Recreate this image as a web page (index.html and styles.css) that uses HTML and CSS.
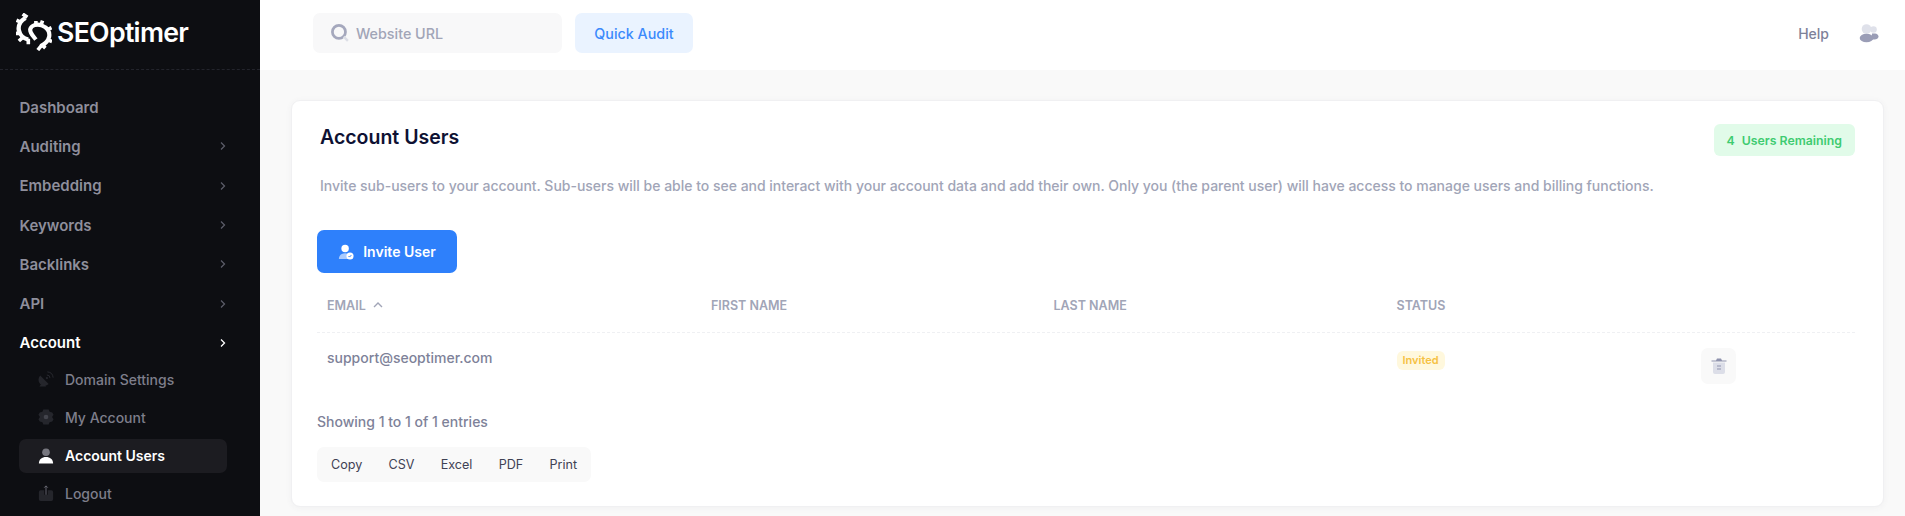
FILE: index.html
```html
<!DOCTYPE html>
<html lang="en">
<head>
<meta charset="utf-8">
<title>Account Users</title>
<link rel="stylesheet" href="styles.css">
</head>
<body>
<div class="app">
  <aside class="sidebar">
    <div class="brand">
      <svg class="brand-icon" viewBox="0 0 38 38" width="36" height="38" fill="none" stroke="#fff">
        <path d="M10 4C5 7 2 12 3 17C4 22 8 26 13 27" stroke-width="4.600"/>
        <path d="M21 27C18 23 14.500 20 15 16C16 12 22 10 27 12C33 14 36 19 35 24C34 29 30 32 26 34" stroke-width="4.400"/>
        <path d="M7 0 12 3.500M0.500 6.500 6 9M0 20.500H5M3 28.500 7.500 24.500M13 32V26M21 7.500V13M28 7 26 13M37.500 14.500 32 17M38 29 33 27M31 36 27 32M23 38 27 33" stroke-width="3.800"/>
      </svg>
      <span class="brand-name">SEOptimer</span>
    </div>
    <nav class="nav">
      <a class="nav-item">Dashboard</a>
      <a class="nav-item">Auditing<svg class="chev" viewBox="0 0 8 10"><path d="M2 1.500 5.500 5 2 8.500"/></svg></a>
      <a class="nav-item">Embedding<svg class="chev" viewBox="0 0 8 10"><path d="M2 1.500 5.500 5 2 8.500"/></svg></a>
      <a class="nav-item">Keywords<svg class="chev" viewBox="0 0 8 10"><path d="M2 1.500 5.500 5 2 8.500"/></svg></a>
      <a class="nav-item">Backlinks<svg class="chev" viewBox="0 0 8 10"><path d="M2 1.500 5.500 5 2 8.500"/></svg></a>
      <a class="nav-item">API<svg class="chev" viewBox="0 0 8 10"><path d="M2 1.500 5.500 5 2 8.500"/></svg></a>
      <a class="nav-item nav-open">Account<svg class="chev" viewBox="0 0 8 10"><path d="M2 1.500 5.500 5 2 8.500"/></svg></a>
      <div class="subnav">
        <a class="sub-item">
          <svg class="sub-icon" viewBox="0 0 18 18"><path class="dim" d="M2.500 5 12 14.500A6.700 6.700 0 0 1 2.500 5Z"/><path class="dim" d="M5 13 1.500 17.500H9L8 14.500Z"/><path class="dim-line" d="M10 4.500a3.500 3.500 0 0 1 3.500 3.500M10.500 1a7 7 0 0 1 6.500 6.500"/><circle class="dim" cx="10" cy="8" r="1.300"/></svg>
          Domain Settings
        </a>
        <a class="sub-item">
          <svg class="sub-icon" viewBox="0 0 18 18"><path class="dim" d="M6 0.500h6l1 2.500 3 .8 1.500 2.700-1.700 2.500 1.700 2.500-1.500 2.700-3 .8-1 2.500H6l-1-2.500-3-.8L.500 11.500 2.200 9 .500 6.500 2 3.800 5 3Z"/><circle class="gear-dot" cx="9" cy="9" r="2.600"/></svg>
          My Account
        </a>
        <a class="sub-item sub-active">
          <svg class="sub-icon" viewBox="0 0 18 18"><circle cx="9" cy="4.800" r="4.300" fill="#77777f"/><path d="M1 17.500c0-5 3.500-7.500 8-7.500s8 2.500 8 7.500Z" fill="#fff"/></svg>
          Account Users
        </a>
        <a class="sub-item">
          <svg class="sub-icon" viewBox="0 0 18 18"><path class="dim" d="M3 6H7V11H11V6H15a2 2 0 0 1 2 2V16a2 2 0 0 1-2 2H3a2 2 0 0 1-2-2V8a2 2 0 0 1 2-2Z"/><path class="up-line" d="M9 11V1M7 3l2-2 2 2"/></svg>
          Logout
        </a>
      </div>
    </nav>
  </aside>
  <div class="main">
    <header class="topbar">
      <div class="search">
        <svg class="search-icon" viewBox="0 0 19 19" width="20" height="20"><circle cx="8.500" cy="8.500" r="6.200" fill="none" stroke="#a5a8bd" stroke-width="2.600"/><path d="M13 13 17 17" stroke="#dcdee6" stroke-width="2.200"/></svg>
        <span class="search-text">Website URL</span>
      </div>
      <button class="audit-btn">Quick Audit</button>
      <span class="help">Help</span>
      <svg class="top-user" viewBox="0 0 20 20" width="20" height="20"><circle cx="14.500" cy="6.500" r="3.300" fill="#dfe1ea"/><path d="M13 10.500h3c2 0 3.500 1.500 3.500 3 0 2-2 3-4 3h-3Z" fill="#9a9db6"/><circle cx="7.500" cy="6" r="4.800" fill="#dfe1ea"/><ellipse cx="7.500" cy="15" rx="6.800" ry="4.300" fill="#9a9db6"/></svg>
    </header>
    <section class="card">
      <div class="card-head">
        <h1 class="title">Account Users</h1>
        <span class="remaining"><b>4</b>Users Remaining</span>
      </div>
      <p class="intro">Invite sub-users to your account. Sub-users will be able to see and interact with your account data and add their own. Only you (the parent user) will have access to manage users and billing functions.</p>
      <button class="invite-btn">
        <svg viewBox="0 0 18 18" width="16" height="16"><circle cx="8" cy="5" r="4.200" fill="#fff"/><path d="M1 17c0-4.500 3-6.500 7-6.500 1.500 0 2.500.3 3.500.8V17Z" fill="#a9cbff"/><circle cx="13.500" cy="13.500" r="4" fill="#fff"/><path d="M11.800 13.500l1.200 1.200 2-2.200" fill="none" stroke="#2e80fb" stroke-width="1.100"/></svg>
        Invite User
      </button>
      <div class="table">
        <div class="row row-head">
          <div class="cell">EMAIL<svg class="sort" viewBox="0 0 10 8" width="10" height="8"><path d="M1 6 5 2l4 4"/></svg></div>
          <div class="cell">FIRST NAME</div>
          <div class="cell">LAST NAME</div>
          <div class="cell">STATUS</div>
          <div class="cell"></div>
        </div>
        <div class="row row-body">
          <div class="cell email">support@seoptimer.com</div>
          <div class="cell"></div>
          <div class="cell"></div>
          <div class="cell"><span class="status">Invited</span></div>
          <div class="cell">
            <span class="trash">
              <svg viewBox="0 0 18 18" width="18" height="18"><path d="M6 3.500 7 1.500h4l1 2h4.500v1h-15v-1Z" fill="#8f93ae"/><path d="M3 5.500h12V15a2 2 0 0 1-2 2H5a2 2 0 0 1-2-2Z" fill="#dcdee8"/><path d="M7 9h4M7 12h4" stroke="#8f93ae" stroke-width="1.200"/></svg>
            </span>
          </div>
        </div>
      </div>
      <div class="entries">Showing 1 to 1 of 1 entries</div>
      <div class="exports">
        <span>Copy</span><span>CSV</span><span>Excel</span><span>PDF</span><span>Print</span>
      </div>
    </section>
  </div>
</div>
</body>
</html>
```
FILE: styles.css
```css
* { box-sizing: border-box; }
html, body { margin: 0; height: 516px; overflow: hidden; }
body { font-family: Inter, "Liberation Sans", sans-serif; background: #f9f9f9; color: #3f4254; }
.app { display: flex; height: 516px; }

.sidebar { width: 260px; flex: none; background: #0d0e12; }
.brand { height: 70px; display: flex; align-items: center; gap: 5px; padding: 0 0 5px 16px; border-bottom: 1px dashed #23242c; }
.brand-icon { flex: none; }
.brand-name { font-size: 26.700px; font-weight: 600; color: #fff; letter-spacing: -0.7px; }
.nav { padding: 17.500px 14px 0 19.500px; display: flex; flex-direction: column; }
.nav-item { height: 39.300px; flex: none; display: flex; align-items: center; justify-content: space-between; padding-right: 19.500px; font-size: 15px; font-weight: 600; color: #8f8f9c; }
.nav-open { color: #fff; }
.chev { width: 8px; height: 10px; fill: none; stroke: #5b5c68; stroke-width: 1.300; }
.nav-open .chev { stroke: #fff; }
.subnav { display: flex; flex-direction: column; margin: -2px 0 0 -0.500px; }
.sub-item { height: 37.700px; flex: none; display: flex; align-items: center; gap: 11px; padding-left: 19px; border-radius: 7px; font-size: 14px; font-weight: 500; color: #7e7e8b; width: 208px; }
.sub-active { height: 34px; margin: 3px 0 1.500px; color: #fff; font-weight: 600; background: #1c1c21; }
.sub-icon { width: 16px; height: 16px; flex: none; }
.dim { fill: #25262c; }
.gear-dot { fill: #43444c; }
.dim-line { fill: none; stroke: #2b2c33; stroke-width: 1; }
.up-line { fill: none; stroke: #6f707a; stroke-width: 1; }

.main { flex: 1; min-width: 0; display: flex; flex-direction: column; background: linear-gradient(#f5f5f5, #f9f9f9 30px); }
.topbar { height: 70px; flex: none; background: #fff; display: flex; align-items: center; padding: 0 25px 4px 53px; }
.search { width: 249px; height: 40px; background: #f8f8f9; border-radius: 7px; display: flex; align-items: center; gap: 6px; padding-left: 17px; }
.search-text { font-size: 14.300px; font-weight: 500; color: #a1a5b7; }
.audit-btn { margin-left: 13px; width: 118px; height: 40px; border: 0; border-radius: 7px; background: #eaf3ff; color: #3b8afc; font: 500 14.300px Inter, sans-serif; }
.help { margin-left: auto; margin-right: 3px; font-size: 14px; font-weight: 500; color: #7e8299; }
.top-user { margin-left: 27px; margin-top: -1px; margin-right: 1px; }

.card { margin: 30px 21px 0 31px; height: 407px; background: #fff; border: 1px solid #f0f0f2; border-radius: 9px; padding: 24px 28px 0 25px; box-shadow: 0 1px 6px rgba(70, 70, 90, .05); }
.card-head { display: flex; justify-content: space-between; align-items: flex-start; padding-left: 3px; }
.title { margin: -1px 0 0; font-size: 19.500px; font-weight: 600; line-height: 26px; color: #0e1133; }
.remaining { height: 32px; margin-top: -1px; padding: 0 13px 0 12.500px; display: flex; align-items: center; gap: 7px; background: #e1fbe9; border-radius: 6px; font-size: 12.300px; font-weight: 600; color: #3ecb70; }
.remaining b { font-weight: 600; }
.intro { margin: 19px 0 0 3px; font-size: 14px; letter-spacing: -0.012px; font-weight: 500; line-height: 21px; color: #a1a5b7; white-space: nowrap; }
.invite-btn { margin-top: 34px; width: 140px; height: 43px; display: flex; align-items: center; justify-content: center; gap: 9px; border: 0; border-radius: 7px; background: #2e80fb; color: #fff; font: 600 14px Inter, sans-serif; }

.row { display: grid; grid-template-columns: 384px 342.500px 343px 304.500px 1fr; padding-left: 10px; }
.row-head { height: 59.500px; padding-top: 6px; align-items: center; border-bottom: 1px dashed #eff0f3; font-size: 12.500px; font-weight: 600; color: #a1a5b7; }
.row-head .cell { display: flex; align-items: center; gap: 7px; }
.sort { fill: none; stroke: #a1a5b7; stroke-width: 1.400; }
.row-body { height: 79px; padding-top: 15px; }
.email { font-size: 14px; font-weight: 500; color: #7e8299; line-height: 20px; }
.status { display: inline-block; height: 19px; padding: 0 6px; line-height: 19px; border-radius: 6px; background: #fff8dd; color: #f6c142; font-size: 11px; font-weight: 600; }
.trash { display: flex; align-items: center; justify-content: center; width: 35px; height: 36px; background: #f9f9f9; border-radius: 7px; }

.entries { font-size: 14px; font-weight: 500; color: #7e8299; line-height: 20px; }
.exports { margin-top: 15px; width: 274px; height: 35px; background: #f9f9f9; border-radius: 7px; display: flex; align-items: center; justify-content: space-between; padding: 0 14px; font-size: 12.600px; color: #3f4254; }
```
